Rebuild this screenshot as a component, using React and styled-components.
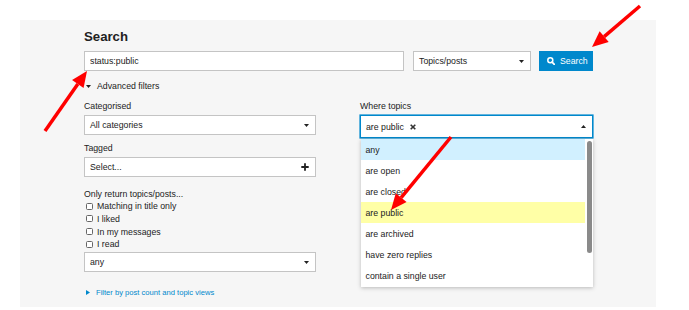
import React from "react";
import styled, { createGlobalStyle } from "styled-components";

const GlobalStyle = createGlobalStyle`
  html, body {
    margin: 0;
    padding: 0;
    background: #fff;
  }
  body {
    font-family: "Liberation Sans", Arial, sans-serif;
    color: #222;
  }
`;

const Page = styled.div`
  position: relative;
  width: 689px;
  height: 310px;
  padding: 20px 0 0 20px;
  box-sizing: border-box;
  overflow: hidden;
`;

const Panel = styled.div`
  width: 636px;
  box-sizing: border-box;
  background: #f6f6f6;
  padding: 9px 63px 8px 64px;
  font-size: 8.75px;
`;

const Title = styled.h2`
  margin: 0;
  font-size: 13.2px;
  line-height: 16px;
  font-weight: bold;
  color: #222;
`;

const SearchRow = styled.div`
  display: flex;
  margin-top: 6px;
  height: 20px;
`;

const TermInput = styled.input`
  width: 320px;
  height: 20px;
  box-sizing: border-box;
  border: 1px solid #c4c4c4;
  background: #fff;
  padding: 0 5px;
  margin: 0;
  font: inherit;
  color: #222;
  outline: none;
`;

const SelectBox = styled.div`
  display: flex;
  align-items: center;
  justify-content: space-between;
  box-sizing: border-box;
  width: ${(p) => p.$width || "100%"};
  height: ${(p) => p.$height || "20px"};
  margin-left: ${(p) => p.$gap || "0"};
  margin-top: ${(p) => p.$top || "0"};
  padding: 0 6px 0 5px;
  background: #fff;
  border: 1px solid ${(p) => (p.$open ? "#0088cc" : "#c4c4c4")};
  box-shadow: ${(p) => (p.$open ? "0 0 0 0.6px #0088cc" : "none")};
  color: #222;
`;

const SearchButton = styled.button`
  display: flex;
  align-items: center;
  gap: 5px;
  width: 54px;
  height: 20px;
  margin-left: 8px;
  padding: 0 0 0 8px;
  border: none;
  background: #0088cc;
  color: #fff;
  font: inherit;
  cursor: pointer;
`;

const Toggle = styled.div`
  display: flex;
  align-items: center;
  height: 14px;
  margin-top: 8px;
  padding-left: 2px;
  gap: 6px;
  color: #222;
`;

const Columns = styled.div`
  display: grid;
  grid-template-columns: 232px 233px;
  column-gap: 44px;
  margin-top: 7px;
`;

const Column = styled.div`
  position: relative;
  display: flex;
  flex-direction: column;
`;

const Field = styled.div`
  position: relative;
  margin-bottom: ${(p) => p.$space || "7px"};
`;

const Label = styled.div`
  line-height: 12px;
  margin-bottom: ${(p) => p.$space || "3px"};
`;

const Check = styled.label`
  display: flex;
  align-items: center;
  height: 12.65px;
  gap: 4px;
  padding-left: 2px;
`;

const Box = styled.span`
  width: 7px;
  height: 7px;
  border: 1px solid #666;
  border-radius: 1.5px;
  background: #fff;
  box-sizing: border-box;
`;

const FilterLink = styled.a`
  display: flex;
  align-items: center;
  gap: 6px;
  margin-top: 14.5px;
  height: 12px;
  padding-left: 2px;
  font-size: 7.6px;
  color: #0088cc;
  text-decoration: none;
`;

const Chip = styled.span`
  display: flex;
  align-items: center;
  gap: 6px;
`;

const Dropdown = styled.div`
  position: absolute;
  top: calc(100% + 1px);
  left: 1px;
  right: 0;
  height: 148px;
  display: flex;
  background: #fff;
  box-shadow: 0 1px 4px rgba(0, 0, 0, 0.25);
  overflow: hidden;
  z-index: 5;
`;

const Options = styled.ul`
  flex: 1;
  margin: 0;
  padding: 0;
  list-style: none;
`;

const Option = styled.li`
  display: flex;
  align-items: center;
  height: 21px;
  padding-left: 4.5px;
  background: ${(p) =>
    p.$selected ? "#ffffa6" : p.$active ? "#d1f0ff" : "transparent"};
`;

const Scrollbar = styled.div`
  width: 8px;
  padding: 2px 1.5px;
  box-sizing: border-box;
`;

const Thumb = styled.div`
  height: 112px;
  border-radius: 3px;
  background: #8a8a8a;
`;

const Annotations = styled.svg`
  position: absolute;
  top: 0;
  left: 0;
  pointer-events: none;
  z-index: 10;
`;

const Caret = ({ up }) => (
  <svg width="5" height="3" viewBox="0 0 5 3">
    <polygon points={up ? "0,3 5,3 2.5,0" : "0,0 5,0 2.5,3"} fill="#222" />
  </svg>
);

const SearchIcon = () => (
  <svg width="8" height="8" viewBox="0 0 8 8">
    <circle cx="3.3" cy="3.3" r="2.5" fill="none" stroke="#fff" strokeWidth="1.5" />
    <line x1="5.1" y1="5.1" x2="7.3" y2="7.3" stroke="#fff" strokeWidth="1.8" strokeLinecap="round" />
  </svg>
);

const PlusIcon = () => (
  <svg width="8" height="8" viewBox="0 0 8 8">
    <path d="M4 0.3V7.7M0.3 4H7.7" stroke="#222" strokeWidth="1.8" />
  </svg>
);

const CloseIcon = () => (
  <svg width="6" height="6" viewBox="0 0 6 6">
    <path d="M0.7 0.7L5.3 5.3M5.3 0.7L0.7 5.3" stroke="#333" strokeWidth="1.6" />
  </svg>
);

const arrows = [
  { x1: 45, y1: 131, x2: 87, y2: 71 },
  { x1: 640, y1: 6, x2: 592, y2: 47 },
  { x1: 451, y1: 137, x2: 391, y2: 210 },
];

function arrowShape({ x1, y1, x2, y2 }, len = 16, width = 14) {
  const d = Math.hypot(x2 - x1, y2 - y1);
  const ux = (x2 - x1) / d;
  const uy = (y2 - y1) / d;
  const bx = x2 - ux * len;
  const by = y2 - uy * len;
  const nx = (-uy * width) / 2;
  const ny = (ux * width) / 2;
  return {
    bx,
    by,
    head: `${x2},${y2} ${bx + nx},${by + ny} ${bx - nx},${by - ny}`,
  };
}

// only the rows that fit in the open list are shown
const statusOptions = [
  "any",
  "are open",
  "are closed",
  "are public",
  "are archived",
  "have zero replies",
  "contain a single user",
];

const checks = ["Matching in title only", "I liked", "In my messages", "I read"];

export default function App() {
  return (
    <>
      <GlobalStyle />
      <Page>
        <Panel>
          <Title>Search</Title>
          <SearchRow>
            <TermInput readOnly value="status:public" />
            <SelectBox $width="118px" $gap="9px">
              Topics/posts
              <Caret />
            </SelectBox>
            <SearchButton>
              <SearchIcon />
              Search
            </SearchButton>
          </SearchRow>

          <Toggle>
            <Caret />
            Advanced filters
          </Toggle>

          <Columns>
            <Column>
              <Field>
                <Label>Categorised</Label>
                <SelectBox>
                  All categories
                  <Caret />
                </SelectBox>
              </Field>
              <Field $space="11px">
                <Label>Tagged</Label>
                <SelectBox>
                  Select...
                  <PlusIcon />
                </SelectBox>
              </Field>
              <Field $space="0">
                <Label $space="0">Only return topics/posts...</Label>
                {checks.map((c) => (
                  <Check key={c}>
                    <Box />
                    {c}
                  </Check>
                ))}
                <SelectBox $top="1.5px">
                  any
                  <Caret />
                </SelectBox>
              </Field>
              <FilterLink href="#">
                <svg width="4" height="5" viewBox="0 0 4 5">
                  <polygon points="0,0 4,2.5 0,5" fill="#0088cc" />
                </svg>
                Filter by post count and topic views
              </FilterLink>
            </Column>

            <Column>
              <Field>
                <Label>Where topics</Label>
                <SelectBox $open $height="23px">
                  <Chip>
                    are public
                    <CloseIcon />
                  </Chip>
                  <Caret up />
                </SelectBox>
                <Dropdown>
                  <Options>
                    {statusOptions.map((o) => (
                      <Option
                        key={o}
                        $active={o === "any"}
                        $selected={o === "are public"}
                      >
                        {o}
                      </Option>
                    ))}
                  </Options>
                  <Scrollbar>
                    <Thumb />
                  </Scrollbar>
                </Dropdown>
              </Field>
            </Column>
          </Columns>
        </Panel>

        <Annotations width="689" height="310">
          {arrows.map((a, i) => {
            const s = arrowShape(a);
            return (
              <g key={i}>
                <line
                  x1={a.x1}
                  y1={a.y1}
                  x2={s.bx}
                  y2={s.by}
                  stroke="#ff0000"
                  strokeWidth="3.5"
                />
                <polygon points={s.head} fill="#ff0000" />
              </g>
            );
          })}
        </Annotations>
      </Page>
    </>
  );
}
